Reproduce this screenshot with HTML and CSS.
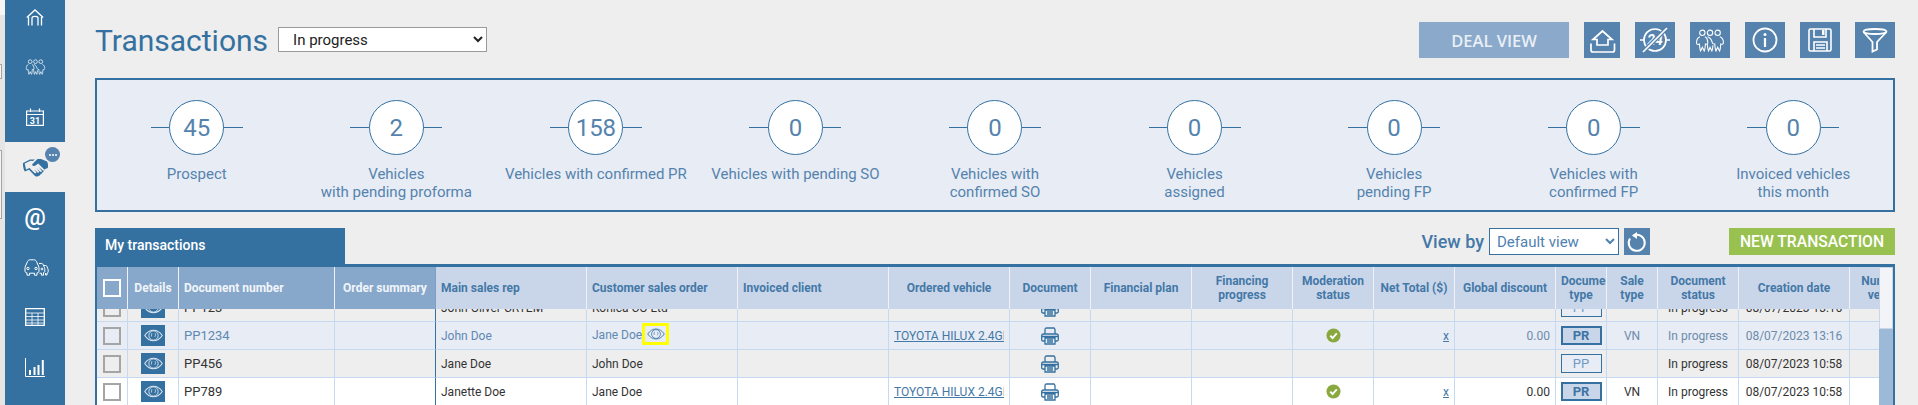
FILE: index.html
```html
<!DOCTYPE html>
<html lang="en">
<head>
<meta charset="utf-8">
<title>Transactions</title>
<link rel="stylesheet" href="styles.css">
</head>
<body>
<svg class="defs" width="0" height="0" aria-hidden="true">
  <symbol id="eye" viewBox="0 0 18 12">
    <path d="M.7 6C3 2.6 5.8 1 9 1s6 1.6 8.3 5C15 9.4 12.2 11 9 11S3 9.4.7 6Z" fill="none" stroke="currentColor" stroke-width="1"/>
    <circle cx="9" cy="6" r="4.4" fill="none" stroke="currentColor" stroke-width=".9"/>
    <path d="M7.4 3.8 7 7M10.4 3.8c.8 1 .6 2.4-.2 3.6" fill="none" stroke="currentColor" stroke-width=".7"/>
  </symbol>
  <symbol id="team" viewBox="0 0 30 24">
    <g fill="none" stroke="currentColor" stroke-width="1.1">
      <circle cx="7" cy="4" r="2.8"/><circle cx="15" cy="4" r="2.8"/><circle cx="23" cy="4" r="2.8"/>
      <path d="M4.5 8C2 9 .8 12 1 15c.3 1.5 2 1.3 3 .7.2 3 .5 6 1.2 7.3L7 19l2 4c.8-1.400 1-4.500 1.200-7.300 1.800 .6 2.600-.4 2.500-2-.1-2.200-.9-4.500-3-5.700"/>
      <path d="M12.500 8c2.500 1 4.200 3 4.800 6 .2 1.200 1.400 1.800 2.700 1.700.1 3 .4 5.800 1.200 7.300L23 19l2 4c.8-1.400 1-4.300 1.200-7.300 1.200 .6 2.800 .4 2.800-1.700 0-2.500-1.500-5.200-3.700-6"/>
      <path d="M12.200 15.700c.2 3 .5 5.800 1.300 7.300l1.500-4 2 4c.6-1.300 .9-4 1-6"/>
    </g>
  </symbol>
  <symbol id="printer" viewBox="0 0 18 18">
    <g fill="none" stroke="currentColor" stroke-width="1.300">
      <path d="M4 7V2.500C4 1.500 4.600 1 5.500 1H13l1 1.500V7"/>
      <path d="M4 14H2C1 14 .7 13.300 .7 12.500V9C.7 8 1.400 7 2.500 7h13c1.100 0 1.800 1 1.800 2v3.500c0 .8-.3 1.500-1.300 1.500h-2"/>
      <path d="M4 11h10v6H4zM.9 9.500h16.200M6 13h6M6 15h6"/>
    </g>
  </symbol>
  <symbol id="check" viewBox="0 0 16 16">
    <circle cx="8" cy="8" r="7.500" fill="#89a93f"/>
    <path d="M4.500 8.200 7 10.700l4.500-5" fill="none" stroke="#fff" stroke-width="2"/>
  </symbol>
</svg>

<div class="edge">
  <span class="edge-top"></span>
  <span class="edge-box edge-box-a"></span>
  <span class="edge-box edge-box-b"></span>
</div>

<nav class="nav">
  <a class="nav-item nav-first">
    <svg class="nav-icon" width="18" height="17" viewBox="0 0 18 17"><g fill="none" stroke="currentColor" stroke-width="1.300"><path d="M.8 8.500 9 1l8.200 7.500"/><path d="M2.500 8v8.500M15.500 8v8.500M6 16.500V9c0-1 1-1.700 3-1.700s3 .7 3 1.700v7.500"/></g></svg>
  </a>
  <a class="nav-item">
    <svg class="nav-icon" width="23" height="16" viewBox="0 0 30 24"><use href="#team"/></svg>
  </a>
  <a class="nav-item">
    <svg class="nav-icon" width="18" height="18" viewBox="0 0 18 18"><g fill="none" stroke="currentColor" stroke-width="1.200"><path d="M.6 3h16.800v14.400H.6zM.6 6.500h16.800M4.500 .5V4M13.500 .5V4"/></g><text class="cal-num" x="9" y="15.500">31</text></svg>
  </a>
  <a class="nav-item nav-active">
    <svg class="nav-icon" width="25" height="19" viewBox="0 0 25 19"><path fill="#3571a0" d="M7 1.500 0 5c-.3 3 .4 6 1.700 8.500L6 11.800l5 5.200c1.500 1.600 3.300 2 4.300 1 1.400-.3 2.300-1 2.300-2 1.200-.2 2-1 2-2 1.200-.2 1.800-1.200 1.400-2.400L24.800 10c.5-2.500.2-4.700-.8-6.500L18 1h-3.500L9.500 6c-.8 1 0 2.300 1.500 2 1.500-.2 3-1.500 4.200-2.500l6.300 6.300c-.4 1-1.300 1-2 .5l-3.800-3.300 3.200 3.900c-.2 1-1.200 1.300-2 .7L13.500 10l2.700 3.800c-.3 1-1.300 1.100-2 .5l-2.700-3 2 3.500c-.4.600-1.300.7-2 .1L6.500 10 3 11.500 1.700 5.500 7.500 2.800l2.300.2L12 1.500Z"/></svg>
    <span class="badge"><i></i><i></i><i></i></span>
  </a>
  <a class="nav-item nav-at">@</a>
  <a class="nav-item">
    <svg class="nav-icon" width="27" height="17" viewBox="0 0 27 17"><g fill="none" stroke="currentColor" stroke-width="1"><path d="M4 6 5.500 2.500C6 1.300 7 .8 8.500 .8h3C13 .8 14 1.300 14.500 2.500L16 6c.8 1 1.200 3 1 6-.1 1.200-.8 1.800-2 1.800v2.400h-2.500v-2H7.500v2H5v-2.400c-1.200 0-1.900-.6-2-1.800-.2-3 .2-5 1-6Z"/><path d="M17 4.500h2.500c1 0 1.500.5 1.800 1.300l.8 2c.6.800.8 2.300.7 4.200 0 1-.5 1.600-1.300 1.600v2.600h-2v-2h-2"/><path d="M22 6.500h1.500c.8 0 1.200.4 1.500 1l.7 2c.5.700.6 1.800.5 3 0 1-.4 1.500-1.200 1.500v2h-1.500v-2"/><circle cx="6" cy="9.500" r="1.200"/><circle cx="14" cy="9.500" r="1.200"/><circle cx="20" cy="10" r=".9"/></g></svg>
  </a>
  <a class="nav-item">
    <svg class="nav-icon" width="20" height="18" viewBox="0 0 20 18"><g fill="none" stroke="currentColor"><path stroke-width="1.300" d="M.7 .7h18.600v16.600H.7z"/><path stroke-width=".8" d="M.7 5h18.600M.7 8.500h18.600M.7 12h18.600M.7 15h18.600M7 5v12.300M13 5v12.300"/></g></svg>
  </a>
  <a class="nav-item">
    <svg class="nav-icon" width="20" height="19" viewBox="0 0 20 19"><path fill="none" stroke="currentColor" stroke-width="1" d="M.5 0v18.500h19.500"/><path fill="currentColor" d="M4 12h2v5H4zM8.500 9h2v8h-2zM12.500 7h2v10h-2zM16.800 2h2v15h-2z"/></svg>
  </a>
</nav>

<main class="main">
  <header class="page-head">
    <h1 class="title">Transactions</h1>
    <select class="status-select"><option>In progress</option></select>
    <div class="actions">
      <button class="deal-btn">DEAL VIEW</button>
      <button class="icon-btn icon-btn-narrow"><svg width="36" height="36" viewBox="0 0 36 36"><g fill="none" stroke="#fff" stroke-width="1.700"><path d="M18.500 9 28 17.500h-4V23H13v-5.500H9Z"/><path d="M7 21.500V28c0 1.300 .7 2 2 2h19.500c1.300 0 2-.7 2-2v-6.500"/></g></svg></button>
      <button class="icon-btn"><svg width="40" height="36" viewBox="0 0 40 36"><g fill="none" stroke="#fff" stroke-width="1.700"><circle cx="20" cy="18" r="11"/><path d="M5 18h4M31 18h4"/></g><text class="no-num" x="20" y="23">24</text><path d="M8 30 32 6" stroke="#5583ad" stroke-width="4"/><path d="M8 30 32 6" stroke="#fff" stroke-width="1.700"/></svg></button>
      <button class="icon-btn"><svg width="40" height="36" viewBox="0 0 40 36"><svg x="5" y="7" width="30" height="23" viewBox="0 0 30 24" color="#fff"><use href="#team"/></svg></svg></button>
      <button class="icon-btn"><svg width="40" height="36" viewBox="0 0 40 36"><circle cx="20" cy="18" r="11.500" fill="none" stroke="#fff" stroke-width="1.800"/><circle cx="20" cy="12.500" r="1.500" fill="#fff"/><path d="M20 16v9" stroke="#fff" stroke-width="2.200"/></svg></button>
      <button class="icon-btn"><svg width="40" height="36" viewBox="0 0 40 36"><g fill="none" stroke="#fff" stroke-width="1.600"><path d="M9 8.500c0-1 .6-1.500 1.500-1.500h19c.9 0 1.500 .5 1.500 1.500v19c0 1-.6 1.500-1.500 1.500h-19c-1 0-1.500-.5-1.500-1.500z"/><path d="M14 7v8h12V7M14 29v-9h13v9M16 23h9M16 26h9"/></g><path d="M22 8h2.500v5H22z" fill="#fff"/></svg></button>
      <button class="icon-btn"><svg width="40" height="36" viewBox="0 0 40 36"><g fill="none" stroke="#fff" stroke-width="1.800"><ellipse cx="20" cy="9.500" rx="11.500" ry="2.500"/><path d="M8.500 10 17.500 20v9.500l4.500-2V20l9.500-10"/></g></svg></button>
    </div>
  </header>

  <section class="stats">
    <div class="stat"><div class="stat-dial"><span class="stat-circle">45</span></div><p class="stat-label">Prospect</p></div>
    <div class="stat"><div class="stat-dial"><span class="stat-circle">2</span></div><p class="stat-label">Vehicles<br>with pending proforma</p></div>
    <div class="stat"><div class="stat-dial"><span class="stat-circle">158</span></div><p class="stat-label">Vehicles with confirmed PR</p></div>
    <div class="stat"><div class="stat-dial"><span class="stat-circle">0</span></div><p class="stat-label">Vehicles with pending SO</p></div>
    <div class="stat"><div class="stat-dial"><span class="stat-circle">0</span></div><p class="stat-label">Vehicles with<br>confirmed SO</p></div>
    <div class="stat"><div class="stat-dial"><span class="stat-circle">0</span></div><p class="stat-label">Vehicles<br>assigned</p></div>
    <div class="stat"><div class="stat-dial"><span class="stat-circle">0</span></div><p class="stat-label">Vehicles<br>pending FP</p></div>
    <div class="stat"><div class="stat-dial"><span class="stat-circle">0</span></div><p class="stat-label">Vehicles with<br>confirmed FP</p></div>
    <div class="stat"><div class="stat-dial"><span class="stat-circle">0</span></div><p class="stat-label">Invoiced vehicles<br>this month</p></div>
  </section>

  <div class="toolbar">
    <div class="tab">My transactions</div>
    <div class="tools">
      <label class="view-label">View by</label>
      <select class="view-select"><option>Default view</option></select>
      <button class="refresh"><svg width="26" height="27" viewBox="0 0 26 27"><path d="M9.500 7.500a8 8 0 1 1-3.500 3" fill="none" stroke="#fff" stroke-width="2"/><path d="M13 4v7L8 7.500Z" fill="#fff"/></svg></button>
      <button class="new-btn">NEW TRANSACTION</button>
    </div>
  </div>

  <div class="frame">
    <div class="viewport">
      <table class="grid grid-head">
        <colgroup><col class="c31"><col class="c51"><col class="c156"><col class="c101"><col class="c151"><col class="c151"><col class="c151"><col class="c121"><col class="c81"><col class="c101"><col class="c101"><col class="c81"><col class="c81"><col class="c101"><col class="c51"><col class="c51"><col class="c81"><col class="c111"><col class="c81"></colgroup>
        <thead>
          <tr>
            <th class="dark"><span class="box box-white"></span></th>
            <th class="dark">Details</th>
            <th class="dark left">Document number</th>
            <th class="dark last-dark">Order summary</th>
            <th class="left">Main sales rep</th>
            <th class="left">Customer sales order</th>
            <th class="left">Invoiced client</th>
            <th>Ordered vehicle</th>
            <th>Document</th>
            <th>Financial plan</th>
            <th>Financing progress</th>
            <th>Moderation status</th>
            <th>Net Total ($)</th>
            <th>Global discount</th>
            <th>Document type</th>
            <th>Sale type</th>
            <th>Document status</th>
            <th>Creation date</th>
            <th>Number of vehicles</th>
          </tr>
        </thead>
      </table>
      <div class="rows">
        <table class="grid grid-body">
          <colgroup><col class="c31"><col class="c51"><col class="c156"><col class="c101"><col class="c151"><col class="c151"><col class="c151"><col class="c121"><col class="c81"><col class="c101"><col class="c101"><col class="c81"><col class="c81"><col class="c101"><col class="c51"><col class="c51"><col class="c81"><col class="c111"><col class="c81"></colgroup>
          <tbody>
            <tr class="row-grey">
              <td class="cen"><span class="box"></span></td>
              <td class="cen"><span class="eye-btn"><svg width="19" height="13"><use href="#eye"/></svg></span></td>
              <td class="doc">PP123</td><td class="split"></td>
              <td>John Oliver CRTEM</td><td>Konica CO Ltd</td><td></td><td></td>
              <td class="cen"><svg class="print" width="18" height="18"><use href="#printer"/></svg></td>
              <td></td><td></td><td></td><td></td><td></td>
              <td class="cen"><span class="pill">PP</span></td><td></td>
              <td class="cen">In progress</td><td class="cen">08/07/2023 13:16</td><td></td>
            </tr>
            <tr class="row-hi">
              <td class="cen"><span class="box"></span></td>
              <td class="cen"><span class="eye-btn"><svg width="19" height="13"><use href="#eye"/></svg></span></td>
              <td class="doc">PP1234</td><td class="split"></td>
              <td>John Doe</td>
              <td>Jane Doe <span class="mark"><svg width="18" height="12"><use href="#eye"/></svg></span></td>
              <td></td>
              <td class="cen"><a class="vehicle">TOYOTA HILUX 2.4GL</a></td>
              <td class="cen"><svg class="print" width="18" height="18"><use href="#printer"/></svg></td>
              <td></td><td></td>
              <td class="cen"><svg class="ok" width="15" height="15"><use href="#check"/></svg></td>
              <td class="num"><a class="x">x</a></td>
              <td class="num">0.00</td>
              <td class="cen"><span class="pill pill-pr">PR</span></td>
              <td class="cen">VN</td>
              <td class="cen">In progress</td><td class="cen">08/07/2023 13:16</td><td></td>
            </tr>
            <tr class="row-grey">
              <td class="cen"><span class="box"></span></td>
              <td class="cen"><span class="eye-btn"><svg width="19" height="13"><use href="#eye"/></svg></span></td>
              <td class="doc">PP456</td><td class="split"></td>
              <td>Jane Doe</td><td>John Doe</td><td></td><td></td>
              <td class="cen"><svg class="print" width="18" height="18"><use href="#printer"/></svg></td>
              <td></td><td></td><td></td><td></td><td></td>
              <td class="cen"><span class="pill">PP</span></td><td></td>
              <td class="cen">In progress</td><td class="cen">08/07/2023 10:58</td><td></td>
            </tr>
            <tr class="row-white">
              <td class="cen"><span class="box"></span></td>
              <td class="cen"><span class="eye-btn"><svg width="19" height="13"><use href="#eye"/></svg></span></td>
              <td class="doc">PP789</td><td class="split"></td>
              <td>Janette Doe</td><td>Jane Doe</td><td></td>
              <td class="cen"><a class="vehicle">TOYOTA HILUX 2.4GL</a></td>
              <td class="cen"><svg class="print" width="18" height="18"><use href="#printer"/></svg></td>
              <td></td><td></td>
              <td class="cen"><svg class="ok" width="15" height="15"><use href="#check"/></svg></td>
              <td class="num"><a class="x">x</a></td>
              <td class="num">0.00</td>
              <td class="cen"><span class="pill pill-pr">PR</span></td>
              <td class="cen">VN</td>
              <td class="cen">In progress</td><td class="cen">08/07/2023 10:58</td><td></td>
            </tr>
          </tbody>
        </table>
      </div>
    </div>
    <div class="scrollbar"><div class="thumb"></div></div>
  </div>
</main>
</body>
</html>
```
FILE: styles.css
```css
* { box-sizing: border-box; }
html, body { height: 100%; margin: 0; overflow: hidden; }
body {
  display: flex;
  background: #eeeeee;
  font-family: Roboto, "Liberation Sans", sans-serif;
  color: #333;
}
.defs { position: absolute; }

/* left edge sliver of the window behind */
.edge { position: relative; width: 5px; flex: none; background: #e5e5e5; }
.edge-top { display: block; height: 15px; background: #f7f7f7; }
.edge-box { position: absolute; left: 0; width: 2px; background: #f4f4f4; border: solid #a5a5a5; border-width: 1px 1px 1px 0; }
.edge-box-a { top: 64px; height: 15px; }
.edge-box-b { top: 150px; height: 69px; }

/* nav */
.nav { width: 60px; flex: none; background: #3571a0; display: flex; flex-direction: column; color: #fff; }
.nav-item { height: 50px; flex: none; display: flex; align-items: center; justify-content: center; position: relative; }
.nav-first { margin-top: -8px; }
.nav-active { background: #eeeeee; color: #3571a0; padding-top: 0; }
.nav-at { font-size: 24px; font-weight: 500; }
.cal-num { font: 700 9px Roboto, sans-serif; text-anchor: middle; fill: currentColor; }
.badge {
  position: absolute; top: 5px; right: 5px; width: 15px; height: 15px; border-radius: 50%;
  background: #5583ad; display: flex; align-items: center; justify-content: center; gap: 1px;
}
.badge i { width: 2px; height: 2px; border-radius: 50%; background: #fff; }

/* main */
.main { flex: 1; min-width: 0; height: 405px; padding: 22px 23px 0 30px; display: flex; flex-direction: column; }
.page-head { display: flex; align-items: flex-start; height: 36px; flex: none; }
.title { margin: 1px 0 0 0; font-size: 30px; line-height: 36px; font-weight: 400; color: #3571a0; }
.status-select {
  margin: 5px 0 0 10px; width: 209px; height: 25px; padding-left: 10px;
  font: 15px Roboto, sans-serif; color: #222; background: #fff; border: 1px solid #9a9a9a; border-radius: 0;
}
.actions { margin-left: auto; display: flex; gap: 15px; }
button { border: 0; padding: 0; margin: 0; display: block; font-family: inherit; }
.deal-btn { width: 150px; height: 36px; background: #8aa9cb; color: #e9eff6; font-family: "Open Sans", sans-serif; font-size: 16.500px; font-weight: 600; }
.icon-btn { width: 40px; height: 36px; background: #5583ad; }
.icon-btn svg { display: block; }
.icon-btn-narrow { width: 36px; }
.no-num { font: italic 700 14px Roboto, sans-serif; text-anchor: middle; fill: #fff; }

/* stats */
.stats {
  flex: none; margin-top: 20px; height: 134px; background: #e7ecf5; border: 2px solid #3571a0;
  display: grid; grid-template-columns: repeat(9, 1fr); padding-top: 20px;
}
.stat { text-align: center; }
.stat-dial { position: relative; width: 92px; height: 55px; margin: 0 auto; display: flex; justify-content: center; }
.stat-dial::before { content: ""; position: absolute; left: 0; right: 0; top: 27px; height: 1px; background: #3571a0; }
.stat-circle {
  position: relative; width: 55px; height: 55px; border-radius: 50%; background: #fff; border: 1px solid #3571a0;
  display: flex; align-items: center; justify-content: center; font-size: 24px; color: #5583ad;
}
.stat-label { margin: 10px 0 0; font-size: 15px; line-height: 18px; color: #5583ad; }

/* toolbar */
.toolbar { flex: none; margin-top: 16px; height: 36px; display: flex; align-items: flex-start; }
.tab { width: 250px; height: 36px; background: #3571a0; color: #fff; font-size: 14px; font-weight: 500; line-height: 34px; padding-left: 10px; }
.tools { margin-left: auto; display: flex; align-items: center; height: 27px; }
.view-label { font-size: 18px; font-weight: 500; color: #4478a7; margin-right: 5px; }
.view-select {
  width: 130px; height: 27px; padding-left: 3px; background: #fff; border: 1px solid #3571a0; border-radius: 0;
  font: 15px Roboto, sans-serif; color: #4f82b0;
}
.refresh { width: 26px; height: 27px; background: #5583ad; margin-left: 5px; }
.refresh svg { display: block; }
.new-btn { width: 166px; height: 27px; margin-left: 79px; background: #99c14f; color: #fff; font-size: 15.700px; font-weight: 500; }

/* table */
.frame { flex: 1; min-height: 0; display: flex; border: solid #3571a0; border-width: 3px 2px 0; }
.viewport { flex: 1; min-width: 0; overflow: hidden; display: flex; flex-direction: column; }
.scrollbar { width: 14px; flex: none; background: #9db9d8; }
.thumb { height: 62px; background: #f2f4f8; border: 1px solid #c9d6e9; }
.grid { table-layout: fixed; border-collapse: separate; border-spacing: 0; width: 1834px; flex: none; }
.c31 { width: 31px; } .c51 { width: 51px; } .c81 { width: 81px; } .c101 { width: 101px; }
.c111 { width: 111px; } .c121 { width: 121px; } .c151 { width: 151px; } .c156 { width: 156px; }
.grid th {
  height: 42px; padding: 0 5px; background: #c9d6e9; color: #4478a7; font-size: 12px; line-height: 14px; font-weight: 700;
  text-align: center; border-right: 1px solid #eef2f8; overflow: hidden;
}
.grid th.dark { background: #88a8cb; color: #f1f5fa; }
.grid th.left { text-align: left; }
.grid th.last-dark { border-right: 1px solid #7d9fc4; }
.box { display: block; width: 18px; height: 18px; margin: 0 auto; border: 2px solid #a5a5a5; }
.box-white { border-color: #fff; }
.rows { flex: 1; min-height: 0; overflow: hidden; }
.grid-body { margin-top: -15px; }
.grid td {
  height: 28px; padding: 0 5px; font-size: 12px; line-height: 14px; border-right: 1px solid #c5daf0; border-bottom: 1px solid #c5daf0;
  white-space: nowrap; overflow: hidden;
}
.grid td.cen { text-align: center; padding: 0; }
.grid td.num { text-align: right; }
.grid td.doc { font-size: 13px; }
.grid td.split { border-right-color: #3571a0; }
.row-grey td { background: #eeeeee; }
.row-white td { background: #fff; }
.row-hi td { background: #e7ecf5; color: #5f88b3; }
.row-hi td.num, .row-hi td.cen { color: #6d8bab; }
.eye-btn { display: flex; width: 24px; height: 21px; margin: 0 auto; background: #3571a0; align-items: center; justify-content: center; color: #dbe5f0; }
.mark { display: inline-flex; vertical-align: middle; align-items: center; justify-content: center; width: 27px; height: 22px; border: 3px solid #ffff00; color: #4d82ae; margin: -3px 0 0 -3px; }
.print { display: block; margin: 0 auto; color: #3571a0; }
.ok { display: block; margin: 0 auto; }
.vehicle { display: block; width: 110px; margin: 0 auto; overflow: hidden; text-align: left; color: #4478a7; text-decoration: underline; }
.x { color: #4478a7; text-decoration: underline; }
.pill { display: block; width: 41px; height: 19px; margin: 0 auto; border: 1px solid #3571a0; background: #e7ecf5; color: #6f9bc5; font-size: 13px; line-height: 17px; }
.pill-pr { border-width: 2px; background: #c9d6e9; color: #3f74a5; font-weight: 700; line-height: 15px; }
.row-hi td.cen .pill-pr { color: #3f74a5; }
```
